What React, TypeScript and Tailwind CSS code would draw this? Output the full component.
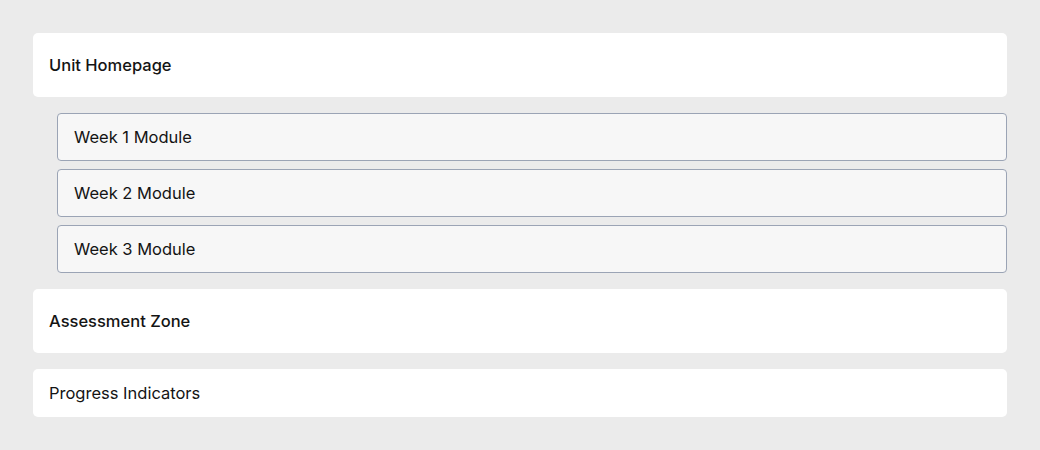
const modules = ["Week 1 Module", "Week 2 Module", "Week 3 Module"];

export default function App() {
  return (
    <div
      className="min-h-[450px] bg-[#ebebeb] p-[33px] text-[16.5px] text-[#141414]"
      style={{ fontFamily: "Inter, sans-serif" }}
    >
      <div className="flex flex-col gap-4">
        <div className="flex h-16 items-center rounded-[5px] bg-white px-4 font-medium">
          Unit Homepage
        </div>
        <div className="flex flex-col gap-2 pl-6">
          {modules.map((m) => (
            <div
              key={m}
              className="flex h-12 items-center rounded-[4px] border border-[#9ba4b5] bg-[#f7f7f7] px-4"
            >
              {m}
            </div>
          ))}
        </div>
        <div className="flex h-16 items-center rounded-[5px] bg-white px-4 font-medium">
          Assessment Zone
        </div>
        <div className="flex h-12 items-center rounded-[5px] bg-white px-4">
          Progress Indicators
        </div>
      </div>
    </div>
  );
}
